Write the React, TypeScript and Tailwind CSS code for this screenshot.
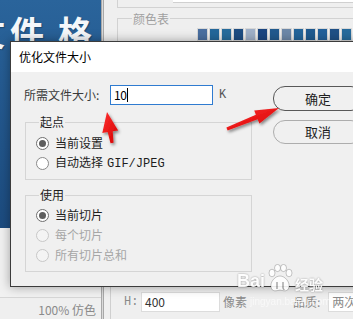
import React from "react";

const swatches = [
  "#4a6fa0", "#24679a", "#276c9c", "#1e4d82", "#9fb0c8", "#1a4580", "#215a8e",
  "#6d88a8", "#24659a", "#1f5a8f", "#22609a", "#1f5086", "#276b9c", "#215f96",
];

function Radio({ checked, disabled }: { checked?: boolean; disabled?: boolean }) {
  if (checked) {
    return (
      <span className="w-[13px] h-[13px] rounded-full border border-[#6f6f6f] bg-white flex items-center justify-center shrink-0">
        <span className="w-[7px] h-[7px] rounded-full bg-[#5f5f5f]" />
      </span>
    );
  }
  return (
    <span
      className={
        disabled
          ? "w-[13px] h-[13px] rounded-full border border-[#c8c8c8] bg-[#f4f4f4] shrink-0"
          : "w-[13px] h-[13px] rounded-full border border-[#8a8a8a] bg-white shrink-0"
      }
    />
  );
}

function RadioRow({
  label,
  checked,
  disabled,
  mono,
}: {
  label: string;
  checked?: boolean;
  disabled?: boolean;
  mono?: string;
}) {
  return (
    <div className="h-[20px] flex items-center gap-[6px]">
      <Radio checked={checked} disabled={disabled} />
      <span className={disabled ? "text-[#a6a6a6]" : "text-[#1e1e1e]"}>
        {label}
        {mono && (
          <span className="font-['Liberation_Mono',monospace] ml-[4px]">{mono}</span>
        )}
      </span>
    </div>
  );
}

export default function App() {
  return (
    <div className="relative w-[353px] h-[319px] overflow-hidden bg-[#efefef] font-['Noto_Sans_CJK_SC',sans-serif] text-[12px] leading-[16px]">
      {/* background application */}
      <div className="flex w-full h-full">
        <div className="w-[101px] shrink-0 flex flex-col">
          <div className="h-[228px] bg-linear-to-b from-[#2a649b] to-[#1c4b7f] overflow-hidden pt-[15px] flex text-[#f4f7fa] font-bold text-[34px] leading-none [text-shadow:1px_1px_1px_rgba(0,0,0,0.25)]">
            <span className="ml-[-29px] shrink-0">文</span>
            <span className="ml-[5px] shrink-0">件</span>
            <span className="ml-[14px] shrink-0">格</span>
          </div>
          <div className="h-[69px] bg-[#f1f1f1]" />
          <div className="flex-1 border-t border-[#d6d6d6] bg-[#efefef] flex justify-end pr-[5px] pt-[4px] text-[#8a8a8a] whitespace-nowrap">
            100% 仿色
          </div>
        </div>
        <div className="w-[3px] shrink-0 bg-[#dadada] border-l border-r border-[#a8a8a8]" />
        <div className="flex-1 min-w-0 flex flex-col bg-[#efefef]">
          <div className="h-[8px] ml-[13px] border-l border-b border-[#d2d2d2] pl-[55px]">
            <div className="h-[3px] bg-white border-b border-[#d0d0d0]" />
          </div>
          <div className="relative mt-[10px] ml-[13px] h-[266px] border-l border-t border-[#d2d2d2] pt-[9px] pl-[79px]">
            <span className="absolute left-[14px] top-[-8px] px-[1px] bg-[#efefef] text-[#a0a0a0]">
              颜色表
            </span>
            <div className="flex gap-[1px]">
              {swatches.map((c, i) => (
                <span
                  key={i}
                  className="w-[11px] h-[13px] shrink-0 border border-[#d8d8d8]"
                  style={{ backgroundColor: c }}
                />
              ))}
            </div>
          </div>
          <div className="ml-[6px] flex-1 border-l border-[#cfcfcf] pt-[8px]">
            <div className="h-[20px] flex items-center pl-[13px] text-[#8a8a8a] whitespace-nowrap">
              <span className="w-[17px] shrink-0 font-['Liberation_Mono',monospace]">H:</span>
              <span className="w-[79px] h-[20px] shrink-0 bg-white border border-[#dcdcdc] pl-[3px] flex items-center text-[#333]">
                400
              </span>
              <span className="ml-[3px] shrink-0">像素</span>
              <span className="ml-[46px] shrink-0">品质:</span>
              <span className="ml-[8px] w-[40px] h-[20px] shrink-0 bg-white border border-[#dcdcdc] pl-[3px] flex items-center text-[#8a8a8a]">
                两次
              </span>
            </div>
          </div>
        </div>
      </div>

      {/* dialog window */}
      <div className="absolute left-[10px] top-[41px] w-[362px] h-[246px] border border-[#3c3c3c] bg-[#f0f0f0] flex flex-col shadow-[0_0_10px_rgba(0,0,0,0.35)]">
        <div className="h-[30px] bg-white flex items-center pl-[8px] text-black">优化文件大小</div>
        <div className="flex-1 flex pl-[13px] pt-[13px]">
          <div className="w-[249px] flex flex-col">
            <div className="h-[20px] flex items-center">
              <span className="w-[86px] text-[#3a3a3a]">所需文件大小:</span>
              <span className="w-[103px] h-[20px] border border-[#2f7bd0] bg-white pl-[3px] flex items-center text-black tracking-[-0.5px]">
                10
                <span className="w-[1px] h-[14px] bg-black ml-[1px]" />
              </span>
              <span className="ml-[6px] font-['Liberation_Mono',monospace] text-[#555]">K</span>
            </div>
            <div className="relative mt-[17px] ml-[1px] w-[227px] h-[58px] border border-[#d5d5d5] pt-[10px] pl-[10px]">
              <span className="absolute left-[13px] top-[-9px] px-[1px] bg-[#f0f0f0] text-[#1e1e1e]">起点</span>
              <RadioRow label="当前设置" checked />
              <RadioRow label="自动选择" mono="GIF/JPEG" />
            </div>
            <div className="relative mt-[15px] ml-[1px] w-[227px] h-[77px] border border-[#d5d5d5] pt-[9px] pl-[10px]">
              <span className="absolute left-[13px] top-[-9px] px-[1px] bg-[#f0f0f0] text-[#1e1e1e]">使用</span>
              <RadioRow label="当前切片" checked />
              <RadioRow label="每个切片" disabled />
              <RadioRow label="所有切片总和" disabled />
            </div>
          </div>
          <div className="pt-[1px] flex flex-col gap-[9px]">
            <button className="w-[90px] h-[25px] rounded-[12px] border border-[#585858] bg-[#f0f0f0] text-[13px] text-[#1e1e1e] flex items-center justify-center">
              确定
            </button>
            <button className="w-[90px] h-[24px] rounded-[12px] border border-[#adadad] bg-[#f0f0f0] text-[13px] text-[#1e1e1e] flex items-center justify-center">
              取消
            </button>
          </div>
        </div>
      </div>

      {/* Baidu watermark */}
      <div className="absolute left-[237px] top-[272px] flex items-end opacity-90 pointer-events-none">
        <span className="text-white font-bold text-[18px] leading-[18px] font-['Liberation_Sans',sans-serif] [text-shadow:0_0_2px_rgba(0,0,0,0.45)]">
          Bai
        </span>
      </div>
      <svg
        className="absolute left-[267px] top-[264px] pointer-events-none opacity-90"
        width="26"
        height="30"
        viewBox="0 0 26 30"
      >
        <g fill="#ffffff" stroke="rgba(0,0,0,0.3)" strokeWidth="0.8">
          <ellipse cx="5" cy="9" rx="3" ry="3.8" />
          <ellipse cx="10.5" cy="4" rx="3" ry="3.6" />
          <ellipse cx="16.5" cy="4" rx="3" ry="3.6" />
          <ellipse cx="22" cy="9" rx="3" ry="3.8" />
          <path d="M13 12 C18 12 23 18 22 23 C21 28 17 27 13 26 C9 27 5 28 4 23 C3 18 8 12 13 12 Z" />
        </g>
        <path d="M10 18 L10 25 M16 18 L16 24 Q16 25.5 17.5 25.5" stroke="rgba(60,60,60,0.6)" strokeWidth="1.2" fill="none" />
      </svg>
      <span className="absolute left-[295px] top-[277px] text-white font-bold text-[14px] leading-[15px] opacity-90 [text-shadow:0_0_2px_rgba(0,0,0,0.45)] pointer-events-none">
        经验
      </span>
      <span className="absolute left-[250px] top-[296px] text-white text-[10px] leading-[12px] opacity-60 font-['Liberation_Sans',sans-serif] pointer-events-none">
        jingyan.baidu.com
      </span>

      {/* red annotation arrows */}
      <svg className="absolute left-0 top-0 pointer-events-none" width="353" height="319" viewBox="0 0 353 319">
        <defs>
          <linearGradient id="redg" x1="0" y1="0" x2="1" y2="1">
            <stop offset="0" stopColor="#ff3030" />
            <stop offset="1" stopColor="#d40000" />
          </linearGradient>
          <filter id="sh" x="-50%" y="-50%" width="200%" height="200%">
            <feDropShadow dx="1.5" dy="2" stdDeviation="1.5" floodColor="#000" floodOpacity="0.45" />
          </filter>
        </defs>
        <g filter="url(#sh)" fill="url(#redg)">
          <path d="M107 112 L118.1 130.4 L112.7 131.3 L113.5 142.8 L110.5 143.2 L107.7 132.1 L102.3 133 Z" />
          <path d="M279 108 L259.4 123.5 L257.7 119.3 L227.6 130.4 L226.4 127.6 L255.9 114.7 L254.2 110.5 Z" />
        </g>
      </svg>
    </div>
  );
}
